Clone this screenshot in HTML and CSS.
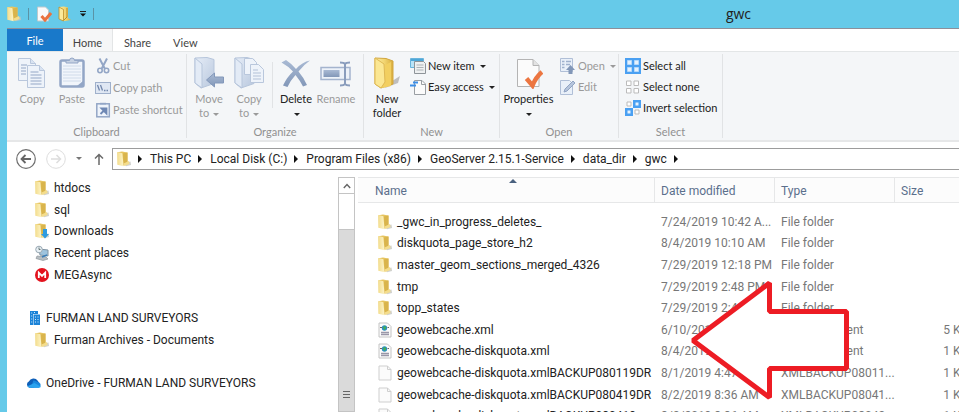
FILE: index.html
```html
<!DOCTYPE html>
<html lang="en">
<head>
<meta charset="utf-8">
<title>gwc</title>
<link rel="stylesheet" href="styles.css">
</head>
<body>
<svg class="defs" aria-hidden="true">
  <defs>
    <linearGradient id="gold" x1="0" x2="1"><stop offset="0" stop-color="#fbeca6"/><stop offset=".5" stop-color="#f3d672"/><stop offset="1" stop-color="#d9ae3f"/></linearGradient>
    <linearGradient id="pale" x1="0" x2="1"><stop offset="0" stop-color="#f3dd8d"/><stop offset="1" stop-color="#fdf4c9"/></linearGradient>
    <linearGradient id="steel" x1="0" x2="1" y2="1"><stop offset="0" stop-color="#e6edf7"/><stop offset="1" stop-color="#b9c8de"/></linearGradient>
    <linearGradient id="slate" x1="0" y1="0" x2="0" y2="1"><stop offset="0" stop-color="#a9bad4"/><stop offset="1" stop-color="#8297b8"/></linearGradient>
    <symbol id="folder" viewBox="0 0 14 16">
      <path d="M7 12.500l6.500-2 .5 3.500L9 15.300z" fill="#c4c6c2" opacity=".8"/>
      <path d="M.5 1.200L5 .5l5.500 1V12L7 14.500 1 13.500z" fill="#e6c45f"/>
      <path d="M6 2.500L10.500 1.500v10l-4 3.500z" fill="#d9b44c"/>
      <path d="M.3 1L5.300 2.200 6.600 15.300 .3 13.800z" fill="url(#pale)"/>
      <path d="M6.500 12.500l5.500-2.500.5 3-5 2z" fill="#f4dd8c"/>
    </symbol>
    <symbol id="page" viewBox="0 0 14 16">
      <path d="M1 1h8.500L13 4.500V15H1z" fill="#fbfbfb" stroke="#cfcfcf"/><path d="M9.500 1v3.500H13" fill="none" stroke="#cfcfcf"/>
    </symbol>
    <symbol id="xml" viewBox="0 0 14 16">
      <path d="M1 1h8.500L13 4.500V15H1z" fill="#fbfbfb" stroke="#c4c4c4"/>
      <circle cx="6.500" cy="6" r="2.700" fill="#2b8fc0"/><path d="M5 5l2.500-1L8 6.500 6.500 8z" fill="#45b04e"/>
      <path d="M2 5.500h2M9.500 5.500h1.500" stroke="#666"/><path d="M3 10.500h8M3 12.500h8" stroke="#9a97a8" stroke-width="1.500"/>
    </symbol>
  </defs>
</svg>

<div class="window">
  <header class="titlebar">
    <div class="quick">
      <svg width="14" height="16"><use href="#folder"/></svg>
      <span class="tick"></span>
      <svg class="q-props" width="15" height="16" viewBox="0 0 15 16"><path d="M.5 1h8l3 3v11H.500z" fill="#fafafa" stroke="#bfc9cc"/><path d="M4.500 10l3.500 4 6-7" fill="none" stroke="#e9723f" stroke-width="3"/></svg>
      <svg class="q-new" width="13" height="16" viewBox="0 0 13 16"><path d="M1 1l5-.5 4 1V12l3 2-6 1-6-2z" fill="url(#gold)"/><path d="M1 1l4.500 2.500V15L1 13z" fill="#fbe99a" stroke="#b98e2b" stroke-width=".8"/><path d="M9 2v9l-3 3" fill="none" stroke="#b98e2b"/></svg>
      <svg class="q-menu" width="6" height="6" viewBox="0 0 6 6"><path d="M0 .500h6" stroke="#222"/><path d="M0 2.500h6L3 5.500z" fill="#111"/></svg>
      <span class="tick"></span>
    </div>
    <h1 class="title">gwc</h1>
  </header>

  <nav class="tabs">
    <button class="tab file">File</button>
    <button class="tab home">Home</button>
    <button class="tab">Share</button>
    <button class="tab">View</button>
  </nav>

  <section class="ribbon">
    <div class="group clipboard">
      <div class="tools">
        <button class="big off"><svg width="28" height="32" viewBox="0 0 28 32"><g fill="#eef3fa" stroke="#b9c7dc"><path d="M.5 1.500h12l5 5v17H.500z"/><path d="M12.500 1.500v5h5" fill="#d9e3f1"/><path d="M9.500 8.500h12l5 5v17h-17z"/><path d="M21.500 8.500v5h5" fill="#d9e3f1"/></g><path d="M3 8h6M3 11h5M3 14h5M3 17h5M12.500 15h8M12.500 18h11M12.500 21h11M12.500 24h11M12.500 27h11" stroke="#b3c1d7" stroke-width="1.300"/></svg><span>Copy</span></button>
        <button class="big off"><svg width="26" height="32" viewBox="0 0 26 32"><rect x="1.500" y="3.500" width="23" height="26" rx="1.500" fill="#f1f5fb" stroke="#93a6c6" stroke-width="2.500"/><path d="M4 9h18M4 12h18M4 15h18M4 18h18M4 21h18M4 24h18" stroke="#d0dbea"/><path d="M7 6V3.500h3.500a2.500 2.500 0 0 1 5 0H19V6z" fill="#c7d2e3" stroke="#93a6c6"/><path d="M18 29l6-5v5z" fill="#93a6c6"/></svg><span>Paste</span></button>
        <div class="stack">
          <button class="small off"><svg width="16" height="16" viewBox="0 0 16 16"><path d="M4.500.500L10 11M12 .500L6.500 11" stroke="#93a6c6" stroke-width="2"/><circle cx="5" cy="12.500" r="2.200" fill="none" stroke="#93a6c6" stroke-width="1.600"/><circle cx="11.500" cy="12.500" r="2.200" fill="none" stroke="#93a6c6" stroke-width="1.600"/></svg>Cut</button>
          <button class="small off"><svg width="16" height="16" viewBox="0 0 16 16"><rect x=".5" y="2.500" width="15" height="11" fill="#dfe7f3" stroke="#9fb0cb"/><path d="M2.500 5l2 5.500M5.500 5l2 5.500M9 10.500h1.500M11.500 10.500H13" stroke="#7287ac" stroke-width="1.300"/></svg>Copy path</button>
          <button class="small off"><svg width="16" height="16" viewBox="0 0 16 16"><rect x="1.800" y="1.800" width="12.500" height="13" fill="#eff4fb" stroke="#93a6c6" stroke-width="1.500"/><path d="M5 2.500V.800h6v1.700z" fill="#93a6c6"/><path d="M5.500 12l4-4M6.500 6.500h5v5z" stroke="#6f88b4" stroke-width="1.800" fill="#6f88b4"/></svg>Paste shortcut</button>
        </div>
      </div>
      <h2>Clipboard</h2>
    </div>

    <div class="group organize">
      <div class="tools">
        <button class="big off"><svg width="30" height="32" viewBox="0 0 30 32"><path d="M1 1l12-.5 7 2v24L7 31l-6-5z" fill="url(#steel)" stroke="#b6c5db"/><path d="M1 1l7 6v24l-7-5z" fill="#e3ebf6" stroke="#b6c5db"/><path d="M12.500 23l8-7v4h9v6h-9v4z" fill="url(#slate)" stroke="#8398ba"/></svg><span>Move<br>to <i class="caret"></i></span></button>
        <button class="big off"><svg width="30" height="32" viewBox="0 0 30 32"><path d="M1 1l12-.5 7 2v24L7 31l-6-5z" fill="url(#steel)" stroke="#b6c5db"/><path d="M10.500 1.500h8l4 4v12h-12z" fill="#eef3fa" stroke="#b9c7dc"/><path d="M16.500 7.500h8l5 5v13h-13z" fill="#eef3fa" stroke="#b9c7dc"/><path d="M19 13h5M19 16h8M19 19h8M19 22h8" stroke="#b3c1d7"/><path d="M1 1l7 6v24l-7-5z" fill="#e3ebf6" stroke="#b6c5db"/></svg><span>Copy<br>to <i class="caret"></i></span></button>
        <span class="rule"></span>
        <button class="big"><svg width="30" height="32" viewBox="0 0 30 32"><path d="M.5 5.500L5 3q6 4 10 9Q21 5 29 3.500q-6 4-11.500 11Q23 21 26 28l-4 1.500q-3-6-7.500-11.500Q9 24 6.500 30L2 28.500Q6 20 12 14.500 7 9 .5 5.500z" fill="url(#slate)"/></svg><span>Delete<br><i class="caret"></i></span></button>
        <button class="big off"><svg width="32" height="32" viewBox="0 0 32 32"><rect x="1" y="10.500" width="29" height="12" fill="#edf2f9" stroke="#a4b4ce" stroke-width="1.500"/><rect x="3.500" y="13" width="16" height="7" fill="url(#slate)"/><path d="M20 5.500q4 0 5 1.500 1-1.500 5-1.500M25 7v20M20 28.500q4 0 5-1.500 1 1.500 5 1.500" fill="none" stroke="#8a9dbd" stroke-width="2"/></svg><span>Rename</span></button>
      </div>
      <h2>Organize</h2>
    </div>

    <div class="group new">
      <div class="tools">
        <button class="big"><svg width="30" height="32" viewBox="0 0 30 32"><path d="M14 28l14-9-2 7-13 5z" fill="#999" opacity=".6"/><path d="M3 1l11 .500 7 2.500v23L9 31l-6-4z" fill="url(#gold)" stroke="#d2a73f"/><path d="M13 8l6-3v24l-9 2z" fill="#f2cf60"/><path d="M3 1l9 6 1 18-4 6-6-4z" fill="#fbe793" stroke="#dfb954"/></svg><span>New<br>folder</span></button>
        <div class="stack">
          <button class="small"><svg width="16" height="16" viewBox="0 0 16 16"><path d="M.5.500h13v9H.500z" fill="#b9e3f7" stroke="#6ab4dc"/><path d="M1 1h12v2H1z" fill="#4da7d8"/><path d="M4.500 3.500h9l2 2v10h-11z" fill="#eef0f1" stroke="#8e9499"/><path d="M6.500 7h7M6.500 9.500h7M6.500 12h7" stroke="#aeb4b8"/></svg>New item<i class="caret"></i></button>
          <button class="small"><svg width="16" height="16" viewBox="0 0 16 16"><path d="M4.500 1.500h7.500l3.500 3.500v10.500h-11z" fill="#fbfbfb" stroke="#999ea3"/><path d="M11.500 1.500v4h4" fill="none" stroke="#999ea3"/><path d="M3 3.500h5M0 6.500h6" stroke="#3d8fe8" stroke-width="1.800"/></svg>Easy access<i class="caret"></i></button>
        </div>
      </div>
      <h2>New</h2>
    </div>

    <div class="group open">
      <div class="tools">
        <button class="big wide"><svg width="28" height="32" viewBox="0 0 28 32"><path d="M2.500 2.500h15.500l6 6v21h-21.500z" fill="#fbfbfb" stroke="#b4b4b4"/><path d="M18 2.500v6h6" fill="#e3e3e3" stroke="#b4b4b4"/><path d="M11.500 21.500l6 7Q21 20 27 15" fill="none" stroke="#ec7641" stroke-width="4.500"/></svg><span>Properties<br><i class="caret"></i></span></button>
        <div class="stack">
          <button class="small off"><svg width="16" height="16" viewBox="0 0 16 16"><path d="M.5.500h12v13H.500z" fill="#e9f0f9" stroke="#b0bfd7"/><path d="M2 3.500h2.500M2 6.500h2.500M2 9.500h2.500M6 3.500h5M6 6.500h4" stroke="#9fb1cd" stroke-width="1.500"/><path d="M10.500 7l4.500 5h-2.500v4h-4v-4H6z" fill="#8297b8"/></svg>Open<i class="caret"></i></button>
          <button class="small off"><svg width="16" height="16" viewBox="0 0 16 16"><path d="M.5 1.500h9l3 3v11H.500z" fill="#e9f0f9" stroke="#b0bfd7"/><path d="M4 13l1-3 8-8 2 2-8 8z" fill="#b6c5dc" stroke="#91a4c3"/></svg>Edit</button>
        </div>
      </div>
      <h2>Open</h2>
    </div>

    <div class="group select">
      <div class="tools">
        <div class="stack">
          <button class="small"><svg width="16" height="16" viewBox="0 0 16 16"><path d="M0 0h16v16H0z" fill="#4aa0f2"/><path d="M2.500 2.500h4v4h-4zM9.500 2.500h4v4h-4zM2.500 9.500h4v4h-4zM9.500 9.500h4v4h-4z" fill="#e6f2fd" stroke="#b5d8fa"/></svg>Select all</button>
          <button class="small"><svg width="16" height="16" viewBox="0 0 16 16"><path d="M1.500 2h4.500v4.500H1.500zM9 2h4.500v4.500H9zM1.500 9.500h4.500v4.500H1.500zM9 9.500h4.500v4.500H9z" fill="#fff" stroke="#bbb"/></svg>Select none</button>
          <button class="small"><svg width="16" height="16" viewBox="0 0 16 16"><path d="M8 0h8v8H8zM0 8h8v8H0z" fill="#4aa0f2"/><path d="M10.500 2.500h3v3h-3zM2.500 10.500h3v3h-3z" fill="#e6f2fd"/><path d="M2 2h4v4H2zM10 10h4v4h-4z" fill="#fff" stroke="#bbb"/></svg>Invert selection</button>
        </div>
      </div>
      <h2>Select</h2>
    </div>
  </section>

  <nav class="address">
    <button class="round" aria-label="Back"><svg width="20" height="20" viewBox="0 0 20 20"><circle cx="10" cy="10" r="9.300" fill="#fff" stroke="#6e6e6e" stroke-width="1.200"/><path d="M15 10H6M9.500 6L5.500 10l4 4" fill="none" stroke="#666" stroke-width="1.800"/></svg></button>
    <button class="round" aria-label="Forward"><svg width="20" height="20" viewBox="0 0 20 20"><circle cx="10" cy="10" r="9.300" fill="#fff" stroke="#ddd"/><path d="M5 10h9M10.500 6l4 4-4 4" fill="none" stroke="#ddd" stroke-width="1.500"/></svg></button>
    <button class="history" aria-label="Recent locations"><i class="caret"></i></button>
    <button aria-label="Up"><svg width="10" height="12" viewBox="0 0 10 12"><path d="M5 12V2M1 5.500l4-4 4 4" fill="none" stroke="#6a6a6a" stroke-width="1.500"/></svg></button>
    <div class="path">
      <svg width="14" height="16"><use href="#folder"/></svg>
      <i class="arrow"></i><a href="#">This PC</a>
      <i class="arrow"></i><a href="#">Local Disk (C:)</a>
      <i class="arrow"></i><a href="#">Program Files (x86)</a>
      <i class="arrow"></i><a href="#">GeoServer 2.15.1-Service</a>
      <i class="arrow"></i><a href="#">data_dir</a>
      <i class="arrow"></i><a href="#">gwc</a>
      <i class="arrow"></i>
    </div>
  </nav>

  <main class="content">
    <aside class="tree">
      <a class="node" href="#"><svg width="14" height="16"><use href="#folder"/></svg>htdocs</a>
      <a class="node" href="#"><svg width="14" height="16"><use href="#folder"/></svg>sql</a>
      <a class="node" href="#"><svg width="14" height="16" viewBox="0 0 14 16"><use href="#folder"/><path d="M8 6h4v5h2l-4 4.500L6 11h2z" fill="#2e9be0"/></svg>Downloads</a>
      <a class="node" href="#"><svg width="14" height="16" viewBox="0 0 14 16"><path d="M4 4l9 1v6l-8-1z" fill="#9ec3dd" stroke="#8093a2"/><path d="M2 11l9 1 2 2-5 1.500-7-2z" fill="#b7bec3" stroke="#8f979c" stroke-width=".7"/><circle cx="4" cy="4.500" r="3.300" fill="#e7eff4" stroke="#9aa9b3"/><path d="M4 2.500v2h1.500" fill="none" stroke="#677"/><path d="M7 12l5-2" stroke="#3a7eb8" stroke-width="1.500"/></svg>Recent places</a>
      <a class="node" href="#"><svg width="14" height="16" viewBox="0 0 14 16"><circle cx="7" cy="8" r="7" fill="#e3131e"/><path d="M3.800 11V5.700L7 9l3.200-3.300V11" fill="none" stroke="#fff" stroke-width="1.800"/></svg>MEGAsync</a>
      <a class="node root site" href="#"><svg width="11" height="14" viewBox="0 0 11 14"><path d="M0 0h8v3H3v11H0z" fill="#1b83d8"/><path d="M3.500 3.500H10V14H3.500z" fill="#1b83d8"/><path d="M1.200 2h1M4 1.500h1M1.200 5h1M1.200 8h1M1.200 11h1M5 6h1M7.500 6h1M5 8.500h1M7.500 8.500h1M5 11h1M7.500 11h1" stroke="#d5ebfb"/></svg>FURMAN LAND SURVEYORS</a>
      <a class="node library" href="#"><svg width="14" height="16"><use href="#folder"/></svg>Furman Archives - Documents</a>
      <a class="node root drive" href="#"><svg width="16" height="12" viewBox="0 0 17 12"><path d="M3.500 11a3.500 3.500 0 0 1-.5-6.500A5.500 5.500 0 0 1 12.500 3.500L14 6 8 11z" fill="#0f5fb8"/><path d="M8 3l6 2.500a3 3 0 0 1-.5 5.500H5z" fill="#1a86dc"/><path d="M1.500 9.500L9 6l7 4q-1 1-2.500 1H4q-1.500 0-2.500-1.500z" fill="#2ba3ee"/></svg>OneDrive - FURMAN LAND SURVEYORS</a>
    </aside>
    <div class="scrollbar">
      <button class="scroll-up" aria-label="Scroll up"><svg width="8" height="6" viewBox="0 0 8 6"><path d="M.8 5L4 1.500 7.200 5" fill="none" stroke="#666" stroke-width="1.400"/></svg></button>
      <div class="thumb"><span class="grip"></span></div>
    </div>

    <div class="listing">
      <table>
        <thead>
          <tr><th class="sorted">Name</th><th>Date modified</th><th>Type</th><th>Size</th></tr>
        </thead>
        <tbody>
          <tr><td><svg width="14" height="16"><use href="#folder"/></svg>_gwc_in_progress_deletes_</td><td>7/24/2019 10:42 A...</td><td>File folder</td><td></td></tr>
          <tr><td><svg width="14" height="16"><use href="#folder"/></svg>diskquota_page_store_h2</td><td>8/4/2019 10:10 AM</td><td>File folder</td><td></td></tr>
          <tr><td><svg width="14" height="16"><use href="#folder"/></svg>master_geom_sections_merged_4326</td><td>7/29/2019 12:18 PM</td><td>File folder</td><td></td></tr>
          <tr><td><svg width="14" height="16"><use href="#folder"/></svg>tmp</td><td>7/29/2019 2:48 PM</td><td>File folder</td><td></td></tr>
          <tr><td><svg width="14" height="16"><use href="#folder"/></svg>topp_states</td><td>7/29/2019 2:48 PM</td><td>File folder</td><td></td></tr>
          <tr><td><svg width="14" height="16"><use href="#xml"/></svg>geowebcache.xml</td><td>6/10/2019</td><td>XML Document</td><td>5 KB</td></tr>
          <tr><td><svg width="14" height="16"><use href="#xml"/></svg>geowebcache-diskquota.xml</td><td>8/4/2019</td><td>XML Document</td><td>1 KB</td></tr>
          <tr><td><svg width="14" height="16"><use href="#page"/></svg>geowebcache-diskquota.xmlBACKUP080119DR</td><td>8/1/2019 4:47 PM</td><td>XMLBACKUP08011...</td><td>1 KB</td></tr>
          <tr><td><svg width="14" height="16"><use href="#page"/></svg>geowebcache-diskquota.xmlBACKUP080419DR</td><td>8/2/2019 8:36 AM</td><td>XMLBACKUP08041...</td><td>1 KB</td></tr>
          <tr><td><svg width="14" height="16"><use href="#page"/></svg>geowebcache-diskquota.xmlBACKUP080419</td><td>8/2/2019 8:36 AM</td><td>XMLBACKUP08042...</td><td>1 KB</td></tr>
        </tbody>
      </table>
      <svg class="pointer" width="160" height="124" viewBox="0 0 160 124"><path d="M3 61.500L79.500 4v28.500h77v57h-77V118.500z" fill="#fff" stroke="#ed1c24" stroke-width="5" stroke-linejoin="bevel"/></svg>
    </div>
  </main>
</div>
</body>
</html>
```

FILE: styles.css
```css
* { box-sizing: border-box; }

body {
  margin: 0;
  height: 100vh;
  overflow: hidden;
  background: #fff;
  font: 12px/16px Roboto, "Noto Sans", sans-serif;
  color: #222;
}

button {
  margin: 0;
  padding: 0;
  border: 0;
  background: none;
  font: inherit;
  color: inherit;
  white-space: nowrap;
}

a { color: inherit; text-decoration: none; white-space: nowrap; }
svg { flex: none; display: block; }
.defs { position: absolute; width: 0; height: 0; }

.window {
  display: flex;
  flex-direction: column;
  height: 100vh;
  margin-right: 9px;
  border-left: 7px solid #66cae9;
  overflow: hidden;
}

/* Title bar */
.titlebar {
  display: flex;
  flex: none;
  align-items: center;
  height: 29px;
  background: #66cae9;
  border-bottom: 1px solid #8d8f9a;
}
.quick { display: flex; flex: none; align-items: center; }
.tick { width: 1px; height: 12px; margin-left: 7px; background: #5a93a6; }
.q-props { margin-left: 8px; }
.q-new { margin-left: 6px; }
.q-menu { margin-left: 9px; }
.title {
  flex: 1;
  margin: 0;
  padding-left: 424px;
  text-align: center;
  font: 14px/18px "Open Sans", sans-serif;
}

/* Tabs */
.tabs { display: flex; flex: none; height: 22px; font: 11px/16px Lato, sans-serif; }
.tab { padding: 5px 11px 0; color: #444; }
.file { width: 56px; padding: 2px 0 0; background: #1979ca; color: #fff; }
.home {
  width: 50px;
  padding: 5px 0 0;
  background: #f5f6f7;
  border-right: 1px solid #e3e5e6;
}

/* Ribbon */
.ribbon {
  display: flex;
  flex: none;
  height: 91px;
  font: 11px/16px Lato, sans-serif;
  background: #f4f6f8;
  border-top: 1px solid #e3e6e7;
  border-bottom: 2px solid #e6e7e8;
}
.group {
  display: flex;
  flex-direction: column;
  margin: 2px 0;
  border-right: 1px solid #e1e3e5;
}
.clipboard { width: 180px; }
.organize { width: 177px; }
.new { width: 136px; }
.open { width: 119px; }
.select { width: 104px; }
.tools { display: flex; flex: 1; padding-left: 3px; }
.clipboard .tools { padding-left: 5px; }
.clipboard .stack { gap: 6px; }
.organize .tools { padding-left: 2px; }
.open .tools { padding-left: 0; }
.group h2 {
  margin: 0;
  height: 12px;
  text-align: center;
  font-size: inherit;
  line-height: 12px;
  font-weight: 400;
  color: #909090;
}
.big {
  display: flex;
  flex-direction: column;
  align-items: center;
  width: 40px;
  padding-top: 3px;
  line-height: 14px;
}
.wide { width: 57px; }
.big span { padding-top: 3px; }
.off { color: #9a9a9a; }
.stack { display: flex; flex-direction: column; gap: 5px; padding: 4px 0 0 3px; }
.small { display: flex; align-items: center; gap: 2px; height: 16px; }
.rule { width: 1px; height: 46px; margin: 8px 3px 0; background: #e1e3e5; }
.caret {
  display: inline-block;
  margin-left: 3px;
  border: 3px solid transparent;
  border-top-color: currentColor;
  border-bottom: 0;
  vertical-align: middle;
}
.big .caret { margin-left: 1px; }

/* Address bar */
.address {
  display: flex;
  flex: none;
  align-items: center;
  gap: 8px;
  height: 35px;
  padding: 0 0 2px 9px;
}
.round { margin-right: 2px; }
.history { width: 10px; color: #777; }
.history .caret { display: block; margin-left: 0; width: 6px; }
.path {
  display: flex;
  flex: 1;
  align-items: center;
  height: 22px;
  padding-left: 4px;
  border: 1px solid #9c9c9c;
  border-right: 0;
}
.arrow {
  margin: 0 8px 0 7px;
  border: 4px solid transparent;
  border-left-color: #111;
  border-right: 0;
}

/* Content */
.content { display: flex; flex: 1; min-height: 0; }
.tree {
  display: grid;
  grid-template-rows: repeat(11, 1fr);
  flex: none;
  width: 331px;
  height: 239px;
}
.node { display: flex; align-items: center; gap: 5px; padding-left: 28px; }
.root { padding-left: 23px; }
.site { grid-row: 7; }
.library { grid-row: 8; }
.drive { grid-row: 10; gap: 4px; padding-left: 19px; }
.scrollbar {
  display: flex;
  flex-direction: column;
  flex: none;
  width: 17px;
  border: 1px solid #c4c4c4;
}
.scroll-up {
  display: grid;
  place-items: center;
  height: 16px;
  border-bottom: 1px solid #c4c4c4;
}
.thumb {
  display: flex;
  flex: 1;
  flex-direction: column;
  align-items: center;
  justify-content: flex-end;
  margin-top: 35px;
  padding-bottom: 12px;
  background: #dadada;
  border-top: 1px solid #c4c4c4;
}
.grip {
  width: 7px;
  height: 8px;
  background: repeating-linear-gradient(#666 0 1px, transparent 1px 3px);
}

/* File list */
.listing { position: relative; flex: 1; min-width: 0; margin-left: 3px; overflow: hidden; }
table, thead { display: block; }
tbody {
  display: grid;
  grid-template-rows: repeat(10, 1fr);
  height: 216px;
  margin-top: 8px;
}
tr { display: grid; grid-template-columns: 297px 120px 120px 80px; }
th {
  height: 26px;
  padding: 5px 0 0 6px;
  border: 1px solid #e6e7e8;
  border-left: 0;
  background: #fcfcfc;
  text-align: left;
  font-weight: 400;
  color: #5b6f8c;
}
.sorted { position: relative; padding-left: 17px; }
.sorted::after {
  content: "";
  position: absolute;
  top: 1px;
  left: 51%;
  border: 4px solid transparent;
  border-top: 0;
  border-bottom-color: #4a617f;
}
td {
  display: flex;
  align-items: center;
  padding: 0 0 0 6px;
  white-space: nowrap;
  color: #777;
}
td:first-child { gap: 5px; padding-left: 20px; color: #222; }
td:last-child { justify-content: flex-end; padding-right: 7px; }
.pointer { position: absolute; top: 102px; left: 332px; }
```
